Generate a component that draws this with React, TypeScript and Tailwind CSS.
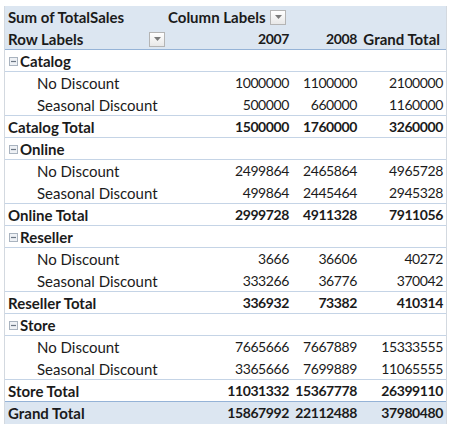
import React from "react"

type Row =
  | { kind: "group"; label: string }
  | { kind: "item"; label: string; v: string[]; last?: boolean }
  | { kind: "total"; label: string; v: string[] }

const groups = [
  {
    name: "Catalog",
    items: [
      ["No Discount", "1000000", "1100000", "2100000"],
      ["Seasonal Discount", "500000", "660000", "1160000"],
    ],
    total: ["1500000", "1760000", "3260000"],
  },
  {
    name: "Online",
    items: [
      ["No Discount", "2499864", "2465864", "4965728"],
      ["Seasonal Discount", "499864", "2445464", "2945328"],
    ],
    total: ["2999728", "4911328", "7911056"],
  },
  {
    name: "Reseller",
    items: [
      ["No Discount", "3666", "36606", "40272"],
      ["Seasonal Discount", "333266", "36776", "370042"],
    ],
    total: ["336932", "73382", "410314"],
  },
  {
    name: "Store",
    items: [
      ["No Discount", "7665666", "7667889", "15333555"],
      ["Seasonal Discount", "3365666", "7699889", "11065555"],
    ],
    total: ["11031332", "15367778", "26399110"],
  },
]

const rows: Row[] = []
groups.forEach((g) => {
  rows.push({ kind: "group", label: g.name })
  g.items.forEach((it, i) =>
    rows.push({ kind: "item", label: it[0], v: it.slice(1), last: i === g.items.length - 1 })
  )
  rows.push({ kind: "total", label: g.name + " Total", v: g.total })
})

const grid = "grid grid-cols-[162px_125px_68px_86px]"

function Dropdown() {
  return (
    <span className="flex h-[15px] w-[16px] items-center justify-center border border-[#b4b4b4] bg-gradient-to-b from-white to-[#e8e8e8]">
      <svg width="7" height="4" viewBox="0 0 7 4">
        <path d="M0 0h7L3.5 4z" fill="#7a7a7a" />
      </svg>
    </span>
  )
}

function Collapse() {
  return (
    <svg width="9" height="9" viewBox="0 0 9 9" className="mr-[2px] shrink-0">
      <rect x="0.5" y="0.5" width="8" height="8" fill="#eef1f5" stroke="#a9b3bf" />
      <path d="M2 4.5h5" stroke="#6b7683" strokeWidth="1.2" />
    </svg>
  )
}

function Num({ children, bold }: { children: React.ReactNode; bold?: boolean }) {
  return (
    <div className={`pr-[3px] text-right text-[14px] tracking-[-0.4px] ${bold ? "font-bold" : ""}`}>
      {children}
    </div>
  )
}

export default function App() {
  return (
    <div className="min-h-[429px] bg-white pl-[4px] pt-[6px] text-[15px] leading-[22px] text-[#1b1b1b] [font-family:Lato,'Liberation_Sans',sans-serif]">
      <div className="w-[443px] border-x border-[#d3d9e0]">
        {/* cabecera */}
        <div className="bg-[#dce6f1] border-b border-[#95b3d7] font-bold">
          <div className={`${grid} h-[22px] items-center`}>
            <div className="pl-[3px]">Sum of TotalSales</div>
            <div className="flex items-center gap-[5px] pl-[1px]">
              Column Labels
              <Dropdown />
            </div>
            <div />
            <div />
          </div>
          <div className={`${grid} h-[21px] items-center`}>
            <div className="flex items-center justify-between pl-[3px] pr-[2px]">
              Row Labels
              <Dropdown />
            </div>
            <Num>2007</Num>
            <Num>2008</Num>
            <div className="pr-[6px] text-right">Grand Total</div>
          </div>
        </div>

        {rows.map((r, i) => {
          if (r.kind === "group") {
            return (
              <div key={i} className={`${grid} h-[22px] items-center border-b border-[#c5d4e6] font-bold`}>
                <div className="flex items-center pl-[4px]">
                  <Collapse />
                  {r.label}
                </div>
                <div />
                <div />
                <div />
              </div>
            )
          }
          if (r.kind === "item") {
            return (
              <div
                key={i}
                className={`${grid} h-[22px] items-center ${r.last ? "border-b border-[#c5d4e6]" : ""}`}
              >
                <div className="pl-[32px]">{r.label}</div>
                {r.v.map((v, j) => (
                  <Num key={j}>{v}</Num>
                ))}
              </div>
            )
          }
          const beforeGrand = r.label === "Store Total"
          return (
            <div
              key={i}
              className={`${grid} h-[22px] items-center border-b font-bold ${
                beforeGrand ? "border-[#95b3d7]" : "border-[#c5d4e6]"
              }`}
            >
              <div className="pl-[3px]">{r.label}</div>
              {r.v.map((v, j) => (
                <Num key={j} bold>
                  {v}
                </Num>
              ))}
            </div>
          )
        })}

        <div className={`${grid} h-[22px] items-center bg-[#dce6f1] font-bold`}>
          <div className="pl-[3px]">Grand Total</div>
          <Num>15867992</Num>
          <Num>22112488</Num>
          <Num>37980480</Num>
        </div>
      </div>
    </div>
  )
}
